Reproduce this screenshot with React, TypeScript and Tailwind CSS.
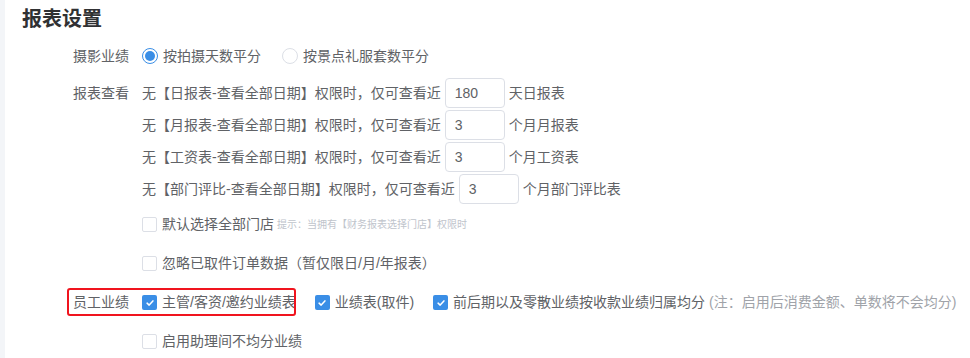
import type { ReactNode } from 'react';

const font = '"Liberation Sans", "Noto Sans CJK SC", "Noto Sans", sans-serif';

function Radio({ checked, label }: { checked?: boolean; label: string }) {
  return (
    <label className="flex items-center gap-[5px]">
      {checked ? (
        <span className="flex h-4 w-4 items-center justify-center rounded-full border border-[#3a8ee6] bg-white">
          <span className="h-[10px] w-[10px] rounded-full bg-[#3a8ee6]" />
        </span>
      ) : (
        <span className="h-4 w-4 rounded-full border border-[#dcdfe6] bg-white" />
      )}
      <span>{label}</span>
    </label>
  );
}

function Checkbox({ checked, children }: { checked?: boolean; children: ReactNode }) {
  return (
    <label className="flex items-center gap-[5px]">
      {checked ? (
        <span className="flex h-[15px] w-[15px] items-center justify-center rounded-[2px] bg-[#3a8ee6]">
          <svg viewBox="0 0 12 12" className="h-[10px] w-[10px]" fill="none">
            <path d="M2.5 6.2 L5 8.5 L9.5 3.5" stroke="white" strokeWidth="1.8" strokeLinecap="round" strokeLinejoin="round" />
          </svg>
        </span>
      ) : (
        <span className="h-[15px] w-[15px] rounded-[2px] border border-[#dcdfe6] bg-white" />
      )}
      <span className="flex items-center">{children}</span>
    </label>
  );
}

function NumInput({ value }: { value: string }) {
  return (
    <span className="mx-1 flex h-[30px] w-[60px] items-center rounded-[4px] border border-[#dcdfe6] bg-white px-[9px] text-[#606266]">
      {value}
    </span>
  );
}

function Row({ label, h, children }: { label?: string; h: string; children: ReactNode }) {
  return (
    <div className={`flex items-center ${h}`}>
      <div className="w-[142px] shrink-0 pr-[13px] text-right">{label}</div>
      <div className="flex items-center">{children}</div>
    </div>
  );
}

const limits = [
  { name: '日报表', value: '180', tail: '天日报表' },
  { name: '月报表', value: '3', tail: '个月月报表' },
  { name: '工资表', value: '3', tail: '个月工资表' },
  { name: '部门评比', value: '3', tail: '个月部门评比表' },
];

export default function App() {
  return (
    <div
      className="flex h-[358px] w-[970px] overflow-hidden bg-white text-[14px] text-[#606266]"
      style={{ fontFamily: font }}
    >
      <div className="w-[5px] shrink-0 bg-[#f3f5f8]" />
      <div className="flex-1">
        <h1 className="pl-[17px] pt-[5px] text-[20px] font-bold leading-[28px] text-[#303133]">报表设置</h1>

        <div className="-ml-[5px] mt-[7px]">
          <Row label="摄影业绩" h="h-[32px]">
            <div className="flex items-center gap-[21px]">
              <Radio checked label="按拍摄天数平分" />
              <Radio label="按景点礼服套数平分" />
            </div>
          </Row>

          <div className="mt-[5px] flex">
            <div className="flex h-[32px] w-[142px] shrink-0 items-center justify-end pr-[13px]">报表查看</div>
            <div>
              {limits.map((l) => (
                <div key={l.name} className="flex h-[32px] items-center">
                  <span>无【{l.name}-查看全部日期】权限时，仅可查看近</span>
                  <NumInput value={l.value} />
                  <span>{l.tail}</span>
                </div>
              ))}
            </div>
          </div>

          <Row h="h-[39px]">
            <Checkbox>
              默认选择全部门店
              <span className="ml-[3px] text-[10px] text-[#c0c4cc]">提示：当拥有【财务报表选择门店】权限时</span>
            </Checkbox>
          </Row>

          <Row h="h-[39px]">
            <Checkbox>忽略已取件订单数据（暂仅限日/月/年报表）</Checkbox>
          </Row>

          <div className="relative">
            <Row label="员工业绩" h="h-[39px]">
              <div className="flex items-center gap-[19px]">
                <Checkbox checked>主管/客资/邀约业绩表</Checkbox>
                <Checkbox checked>业绩表(取件)</Checkbox>
                <Checkbox checked>
                  前后期以及零散业绩按收款业绩归属均分
                  <span className="ml-1 text-[#a0a3a9]">(注：启用后消费金额、单数将不会均分)</span>
                </Checkbox>
              </div>
            </Row>
            <div className="absolute left-[67px] top-[5px] h-[28px] w-[229px] rounded-[3px] border-2 border-[#f0141e]" />
          </div>

          <Row h="h-[39px]">
            <Checkbox>启用助理间不均分业绩</Checkbox>
          </Row>
        </div>
      </div>
    </div>
  );
}
